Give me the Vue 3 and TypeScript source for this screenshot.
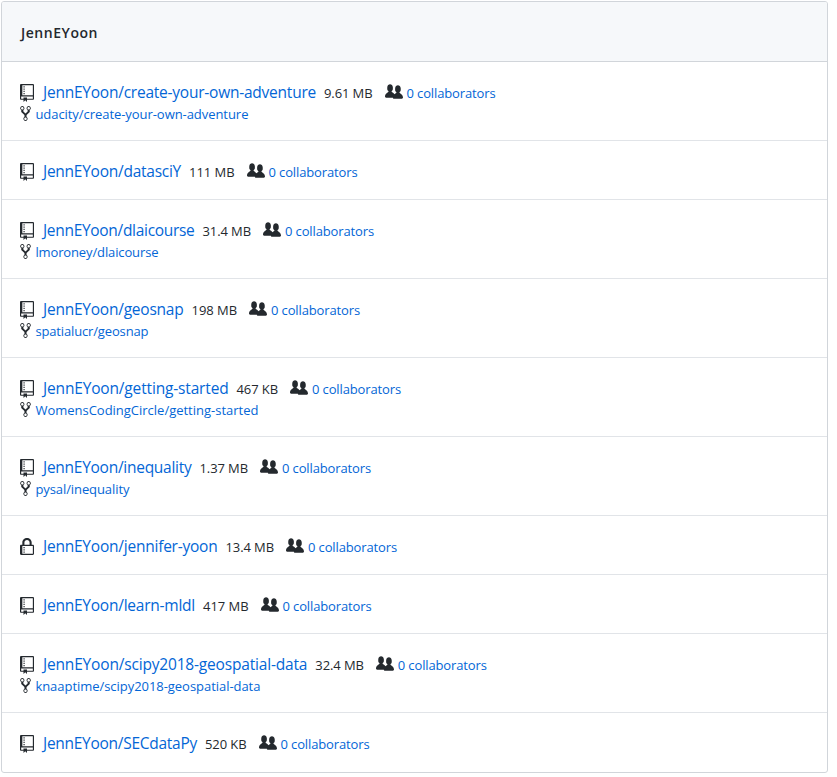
<script setup lang="ts">
import type { Directive } from 'vue'

interface Repo {
  name: string
  nameWidth: number
  size: string
  sizeWidth: number
  source?: string
  sourceWidth?: number
  locked?: boolean
}

const owner = 'JennEYoon'

const repos: Repo[] = [
  { name: 'create-your-own-adventure', nameWidth: 273, size: '9.61 MB', sizeWidth: 48.5, source: 'udacity/create-your-own-adventure', sourceWidth: 213 },
  { name: 'datasciY', nameWidth: 138, size: '111 MB', sizeWidth: 45.5 },
  { name: 'dlaicourse', nameWidth: 151.5, size: '31.4 MB', sizeWidth: 48.5, source: 'lmoroney/dlaicourse', sourceWidth: 123 },
  { name: 'geosnap', nameWidth: 140.5, size: '198 MB', sizeWidth: 45.5, source: 'spatialucr/geosnap', sourceWidth: 113 },
  { name: 'getting-started', nameWidth: 185.5, size: '467 KB', sizeWidth: 41.5, source: 'WomensCodingCircle/getting-started', sourceWidth: 223 },
  { name: 'inequality', nameWidth: 148.5, size: '1.37 MB', sizeWidth: 48.5, source: 'pysal/inequality', sourceWidth: 94 },
  { name: 'jennifer-yoon', nameWidth: 174.5, size: '13.4 MB', sizeWidth: 48.5, locked: true },
  { name: 'learn-mldl', nameWidth: 152, size: '417 MB', sizeWidth: 45.5 },
  { name: 'scipy2018-geospatial-data', nameWidth: 264.3, size: '32.4 MB', sizeWidth: 48.5, source: 'knaaptime/scipy2018-geospatial-data', sourceWidth: 225 },
  { name: 'SECdataPy', nameWidth: 154, size: '520 KB', sizeWidth: 41.5 },
]

const vFit: Directive<HTMLElement, number | undefined> = {
  mounted(el, { value }) {
    if (!value) return
    const count = (el.textContent ?? '').length
    const natural = el.getBoundingClientRect().width
    el.style.letterSpacing = `${(value - natural) / count}px`
  },
}
</script>

<template>
  <section class="box">
    <header class="box-header"><h3 v-fit="77">{{ owner }}</h3></header>
    <ul class="list">
      <li v-for="repo in repos" :key="repo.name" class="row">
        <div class="main">
          <svg v-if="repo.locked" class="icon-repo" viewBox="0 0 12 16" preserveAspectRatio="none">
            <path fill-rule="evenodd" d="M4 13H3v-1h1v1zm8-6v7c0 .55-.45 1-1 1H1c-.55 0-1-.45-1-1V7c0-.55.45-1 1-1h1V4c0-2.2 1.8-4 4-4s4 1.8 4 4v2h1c.55 0 1 .45 1 1zM3.8 6h4.41V4c0-1.22-.98-2.2-2.2-2.2-1.22 0-2.2.98-2.2 2.2v2H3.8zM11 7H2v7h9V7zM4 8H3v1h1V8zm0 2H3v1h1v-1z" />
          </svg>
          <svg v-else class="icon-repo" viewBox="0 0 12 16" preserveAspectRatio="none">
            <path fill-rule="evenodd" d="M4 9H3V8h1v1zm0-3H3v1h1V6zm0-2H3v1h1V4zm0-2H3v1h1V2zm8-1v12c0 .55-.45 1-1 1H6v2l-1.5-1.5L3 16v-2H1c-.55 0-1-.45-1-1V1c0-.55.45-1 1-1h10c.55 0 1 .45 1 1zm-1 10H1v2h2v-1h3v1h5v-2zm0-10H2v9h9V1z" />
          </svg>
          <a class="name" v-fit="repo.nameWidth">{{ owner }}/{{ repo.name }}</a>
          <span class="size" v-fit="repo.sizeWidth">{{ repo.size }}</span>
          <svg class="icon-people" viewBox="0 0 16 16">
            <path fill-rule="evenodd" d="M16 12.999c0 .439-.45 1-1 1H7.995c-.539 0-.994-.447-.995-.999H1c-.54 0-1-.561-1-1 0-2.634 3-4 3-4s.229-.409 0-1c-.841-.621-1.058-.59-1-3 .058-2.419 1.367-3 2.5-3s2.442.58 2.5 3c.058 2.41-.159 2.379-1 3-.229.59 0 1 0 1s1.549.711 2.42 2.088C9.196 9.369 10 8.999 10 8.999s.229-.409 0-1c-.841-.62-1.058-.59-1-3 .058-2.419 1.367-3 2.5-3s2.437.581 2.495 3c.059 2.41-.158 2.38-1 3-.229.59 0 1 0 1s3.005 1.366 3.005 4" />
          </svg>
          <a class="people" v-fit="89">0 collaborators</a>
        </div>
        <div v-if="repo.source" class="fork">
          <svg class="icon-fork" viewBox="0 0 10 16">
            <path fill-rule="evenodd" d="M8 1a1.993 1.993 0 0 0-1 3.72V6L5 8 3 6V4.72A1.993 1.993 0 0 0 2 1a1.993 1.993 0 0 0-1 3.72V6.5l3 3v1.78A1.993 1.993 0 0 0 5 15a1.993 1.993 0 0 0 1-3.72V9.5l3-3V4.72A1.993 1.993 0 0 0 8 1zM2 4.2C1.34 4.2.8 3.65.8 3c0-.65.55-1.2 1.2-1.2.65 0 1.2.55 1.2 1.2 0 .65-.55 1.2-1.2 1.2zm3 10c-.66 0-1.2-.55-1.2-1.2 0-.65.55-1.2 1.2-1.2.65 0 1.2.55 1.2 1.2 0 .65-.55 1.2-1.2 1.2zm3-10c-.66 0-1.2-.55-1.2-1.2 0-.65.55-1.2 1.2-1.2.65 0 1.2.55 1.2 1.2 0 .65-.55 1.2-1.2 1.2z" />
          </svg>
          <a class="source" v-fit="repo.sourceWidth">{{ repo.source }}</a>
        </div>
      </li>
    </ul>
  </section>
</template>

<style>
body {
  background: #fff;
}
</style>

<style scoped>
.box {
  box-sizing: border-box;
  width: 827px;
  height: 772px;
  margin: 1px 0 0 1px;
  border: 1px solid #d1d5da;
  border-radius: 3px;
  color: #24292e;
  font-family: "Open Sans", "Noto Sans", sans-serif;
  font-size: 13px;
  overflow: hidden;
  white-space: nowrap;
}
.box-header {
  box-sizing: border-box;
  display: flex;
  align-items: center;
  height: 60px;
  padding: 2px 19px 0;
  background: #f6f8fa;
  border-bottom: 1px solid #d1d5da;
}
h3 {
  margin: 0;
  font-size: 14px;
  font-weight: 600;
  line-height: 20px;
}
.list {
  margin: 0;
  padding: 0;
  list-style: none;
}
.row {
  padding: 19px 18px 17px;
}
.row + .row {
  border-top: 1px solid #e1e4e8;
}
.main {
  display: flex;
  align-items: center;
  height: 22px;
}
.fork {
  display: flex;
  align-items: center;
  height: 20px;
}
svg {
  flex: none;
  fill: #24292e;
}
a {
  color: #0366d6;
}
.icon-repo {
  width: 14px;
  height: 18px;
  margin-top: 2px;
  margin-right: 9px;
}
.name {
  font-size: 15.5px;
}
.size {
  margin-left: 8px;
  padding-top: 1px;
}
.icon-people {
  width: 18px;
  height: 18px;
  margin-left: 12px;
  margin-right: 4px;
}
.people {
  padding-top: 1px;
}
.icon-fork {
  width: 11px;
  height: 17px;
  margin-right: 4.4px;
}
.source {
  padding-top: 2px;
}
</style>
